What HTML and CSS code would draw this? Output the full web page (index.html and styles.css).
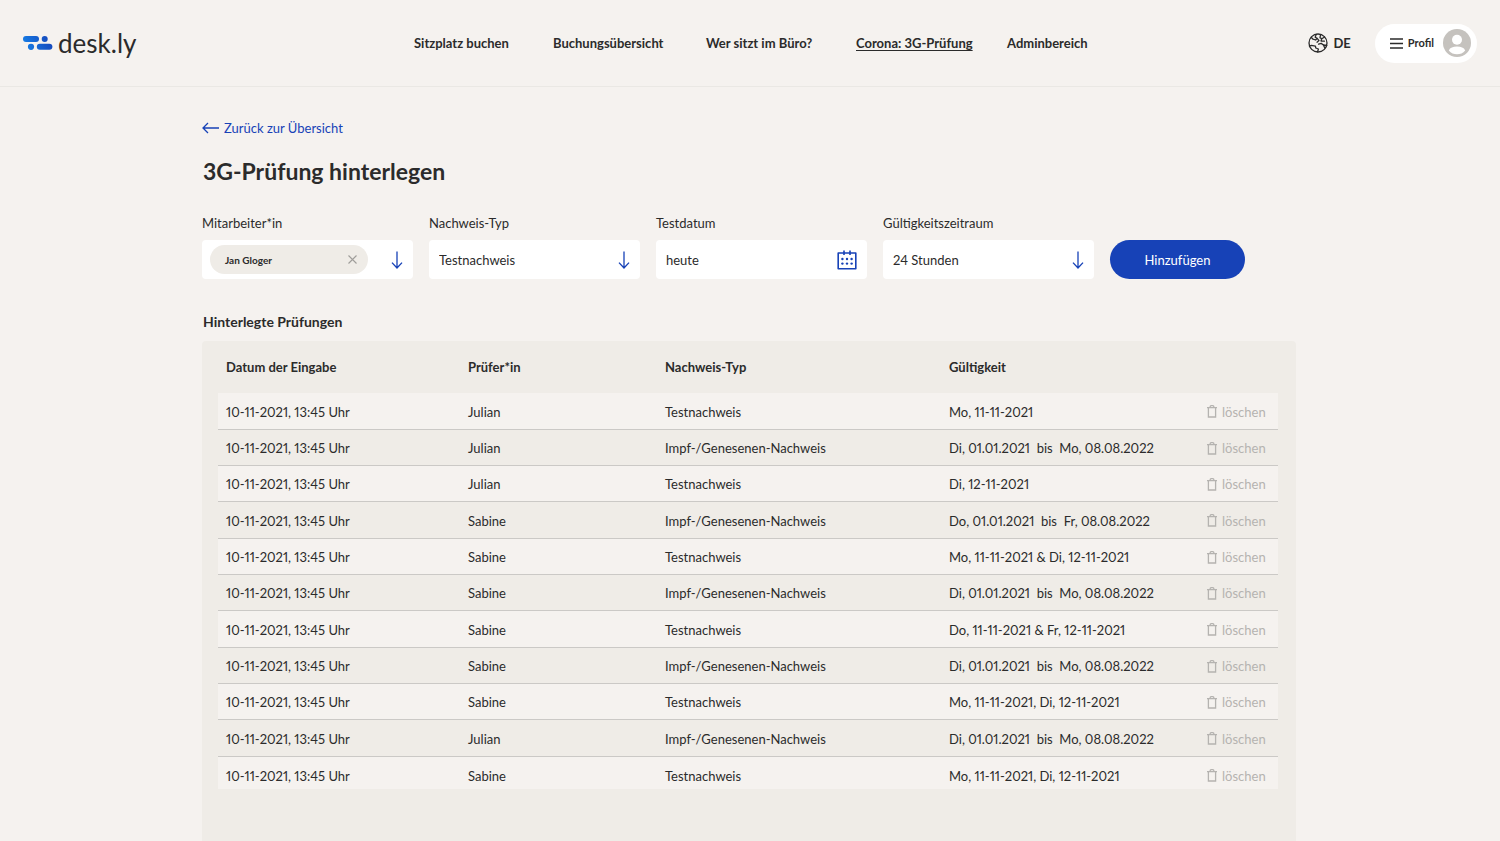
FILE: index.html
```html
<!DOCTYPE html>
<html lang="de">
<head>
<meta charset="utf-8">
<meta name="viewport" content="width=device-width, initial-scale=1">
<title>desk.ly – 3G-Prüfung hinterlegen</title>
<link rel="stylesheet" href="styles.css">
</head>
<body>
<svg class="sprite" aria-hidden="true">
  <symbol id="arrow-down" viewBox="0 0 12 18"><path d="M6 0.5V17M1 11.6L6 17L11 11.6" fill="none" stroke="currentColor" stroke-width="1.3"/></symbol>
  <symbol id="trash" viewBox="0 0 10 13"><path d="M0 2.6H10M1.4 2.6V12H8.6V2.6M3.2 2.6V1.6Q3.2 0.7 4.1 0.7H5.9Q6.8 0.7 6.8 1.6V2.6" fill="none" stroke="currentColor" stroke-width="1.3"/></symbol>
</svg>

<header class="topbar">
  <a class="logo" href="#">
    <svg class="logo-mark" viewBox="0 0 30 14" aria-hidden="true">
      <defs><linearGradient id="brand" gradientUnits="userSpaceOnUse" x1="0" y1="14" x2="30" y2="0"><stop offset="0" stop-color="#1683ea"/><stop offset="1" stop-color="#1541b6"/></linearGradient></defs>
      <g fill="url(#brand)"><rect x="0" y="0" width="16" height="6" rx="3"/><circle cx="21.7" cy="3" r="3"/><circle cx="8" cy="10.8" r="3.1"/><rect x="13.8" y="7.8" width="15.6" height="6" rx="3"/></g>
    </svg>
    <span>desk.ly</span>
  </a>
  <nav class="nav">
    <a href="#">Sitzplatz buchen</a>
    <a href="#">Buchungsübersicht</a>
    <a href="#">Wer sitzt im Büro?</a>
    <a class="active" href="#">Corona: 3G-Prüfung</a>
    <a href="#">Adminbereich</a>
  </nav>
  <div class="tools">
    <button class="lang" type="button">
      <svg width="20" height="20" viewBox="0 0 20 20" fill="none" stroke="currentColor" stroke-width="1.3" stroke-linejoin="round" stroke-linecap="round" aria-hidden="true"><circle cx="10" cy="10" r="9"/><path d="M3.2 4.2L5 6.2L7.6 7L9.2 5.4L7.2 4.2L8.2 1.4M9.2 5.4L11 7.6L9 9.2M12.6 1.6L12 4.6L13.8 5.8L13 8L16.4 8.2M13.8 5.8L16.6 4M18.8 12.4L15.4 12L13.2 10.4L10.6 11.2M15.4 12L16.8 15M1.4 13L3.4 12.4L7.4 13.2L7.8 15L10.4 16L9.6 18.8"/></svg>
      <span>DE</span>
    </button>
    <button class="profile" type="button">
      <svg width="13" height="11" viewBox="0 0 13 11" stroke="#2b2b2b" stroke-width="1.4" aria-hidden="true"><path d="M0 1H13M0 5.5H13M0 10H13"/></svg>
      <span>Profil</span>
      <svg class="avatar" width="28" height="28" viewBox="0 0 28 28" aria-hidden="true"><circle cx="14" cy="14" r="14" fill="#c5c2be"/><circle cx="14" cy="10.8" r="5" fill="#fff"/><path d="M5.8 21.4C7 18.8 10 17.6 14 17.6S21 18.8 22.2 21.4C20 24 17.2 25.2 14 25.2S8 24 5.8 21.4Z" fill="#fff"/></svg>
    </button>
  </div>
</header>

<main class="page">
  <a class="back" href="#">
    <svg width="17" height="12" viewBox="0 0 17 12" fill="none" stroke="currentColor" stroke-width="1.3" aria-hidden="true"><path d="M17 6H1M6 1L1 6L6 11"/></svg>
    <span>Zurück zur Übersicht</span>
  </a>
  <h1>3G-Prüfung hinterlegen</h1>

  <form class="entry">
    <div class="field">
      <label for="employee">Mitarbeiter*in</label>
      <div class="control tags">
        <span class="chip">Jan Gloger
          <button type="button" aria-label="Jan Gloger entfernen"><svg width="9" height="9" viewBox="0 0 9 9" stroke="#a09e9b" stroke-width="1.1" aria-hidden="true"><path d="M0.5 0.5L8.5 8.5M8.5 0.5L0.5 8.5"/></svg></button>
        </span>
        <button class="open" id="employee" type="button"><svg width="12" height="18" aria-hidden="true"><use href="#arrow-down"/></svg></button>
      </div>
    </div>
    <div class="field">
      <label for="proof">Nachweis-Typ</label>
      <div class="control">
        <select id="proof"><option>Testnachweis</option><option>Impf-/Genesenen-Nachweis</option></select>
        <svg class="hint" width="12" height="18" aria-hidden="true"><use href="#arrow-down"/></svg>
      </div>
    </div>
    <div class="field">
      <label for="date">Testdatum</label>
      <div class="control">
        <input id="date" type="text" value="heute">
        <svg class="hint" width="20" height="20" viewBox="0 0 20 20" aria-hidden="true"><path d="M1.2 3H18.8V18.8H1.2ZM7 0.5V5M13 0.5V5" fill="none" stroke="currentColor" stroke-width="1.6" stroke-linejoin="round"/><g fill="currentColor"><circle cx="5.4" cy="9" r="1.2"/><circle cx="10" cy="9" r="1.2"/><circle cx="14.6" cy="9" r="1.2"/><circle cx="5.4" cy="13.6" r="1.2"/><circle cx="10" cy="13.6" r="1.2"/><circle cx="14.6" cy="13.6" r="1.2"/></g></svg>
      </div>
    </div>
    <div class="field">
      <label for="period">Gültigkeitszeitraum</label>
      <div class="control">
        <select id="period"><option>24 Stunden</option><option>48 Stunden</option></select>
        <svg class="hint" width="12" height="18" aria-hidden="true"><use href="#arrow-down"/></svg>
      </div>
    </div>
    <button class="submit" type="button">Hinzufügen</button>
  </form>

  <h2>Hinterlegte Prüfungen</h2>
  <section class="card">
    <table>
      <colgroup><col class="c-date"><col class="c-by"><col class="c-type"><col class="c-valid"><col class="c-act"></colgroup>
      <thead><tr><th>Datum der Eingabe</th><th>Prüfer*in</th><th>Nachweis-Typ</th><th>Gültigkeit</th><td></td></tr></thead>
      <tbody>
        <tr><td>10-11-2021, 13:45 Uhr</td><td>Julian</td><td>Testnachweis</td><td>Mo, 11-11-2021</td><td><button class="del" type="button"><svg width="10" height="13" aria-hidden="true"><use href="#trash"/></svg>löschen</button></td></tr>
        <tr><td>10-11-2021, 13:45 Uhr</td><td>Julian</td><td>Impf-/Genesenen-Nachweis</td><td>Di, 01.01.2021&nbsp; bis&nbsp; Mo, 08.08.2022</td><td><button class="del" type="button"><svg width="10" height="13" aria-hidden="true"><use href="#trash"/></svg>löschen</button></td></tr>
        <tr><td>10-11-2021, 13:45 Uhr</td><td>Julian</td><td>Testnachweis</td><td>Di, 12-11-2021</td><td><button class="del" type="button"><svg width="10" height="13" aria-hidden="true"><use href="#trash"/></svg>löschen</button></td></tr>
        <tr><td>10-11-2021, 13:45 Uhr</td><td>Sabine</td><td>Impf-/Genesenen-Nachweis</td><td>Do, 01.01.2021&nbsp; bis&nbsp; Fr, 08.08.2022</td><td><button class="del" type="button"><svg width="10" height="13" aria-hidden="true"><use href="#trash"/></svg>löschen</button></td></tr>
        <tr><td>10-11-2021, 13:45 Uhr</td><td>Sabine</td><td>Testnachweis</td><td>Mo, 11-11-2021 &amp; Di, 12-11-2021</td><td><button class="del" type="button"><svg width="10" height="13" aria-hidden="true"><use href="#trash"/></svg>löschen</button></td></tr>
        <tr><td>10-11-2021, 13:45 Uhr</td><td>Sabine</td><td>Impf-/Genesenen-Nachweis</td><td>Di, 01.01.2021&nbsp; bis&nbsp; Mo, 08.08.2022</td><td><button class="del" type="button"><svg width="10" height="13" aria-hidden="true"><use href="#trash"/></svg>löschen</button></td></tr>
        <tr><td>10-11-2021, 13:45 Uhr</td><td>Sabine</td><td>Testnachweis</td><td>Do, 11-11-2021 &amp; Fr, 12-11-2021</td><td><button class="del" type="button"><svg width="10" height="13" aria-hidden="true"><use href="#trash"/></svg>löschen</button></td></tr>
        <tr><td>10-11-2021, 13:45 Uhr</td><td>Sabine</td><td>Impf-/Genesenen-Nachweis</td><td>Di, 01.01.2021&nbsp; bis&nbsp; Mo, 08.08.2022</td><td><button class="del" type="button"><svg width="10" height="13" aria-hidden="true"><use href="#trash"/></svg>löschen</button></td></tr>
        <tr><td>10-11-2021, 13:45 Uhr</td><td>Sabine</td><td>Testnachweis</td><td>Mo, 11-11-2021, Di, 12-11-2021</td><td><button class="del" type="button"><svg width="10" height="13" aria-hidden="true"><use href="#trash"/></svg>löschen</button></td></tr>
        <tr><td>10-11-2021, 13:45 Uhr</td><td>Julian</td><td>Impf-/Genesenen-Nachweis</td><td>Di, 01.01.2021&nbsp; bis&nbsp; Mo, 08.08.2022</td><td><button class="del" type="button"><svg width="10" height="13" aria-hidden="true"><use href="#trash"/></svg>löschen</button></td></tr>
        <tr><td>10-11-2021, 13:45 Uhr</td><td>Sabine</td><td>Testnachweis</td><td>Mo, 11-11-2021, Di, 12-11-2021</td><td><button class="del" type="button"><svg width="10" height="13" aria-hidden="true"><use href="#trash"/></svg>löschen</button></td></tr>
      </tbody>
    </table>
  </section>
</main>
</body>
</html>
```

FILE: styles.css
```css
:root {
  --bg: #f5f2ef;
  --panel: #efece7;
  --ink: #2b2b2b;
  --blue: #1742b7;
  --muted: #b5b3b0;
}
* { box-sizing: border-box; }
body {
  margin: 0;
  min-height: 100vh;
  display: flex;
  flex-direction: column;
  background: var(--bg);
  color: var(--ink);
  font-family: Lato, "Liberation Sans", sans-serif;
  font-size: 13px;
  line-height: 20px;
  font-variant-numeric: proportional-nums;
}
a { color: inherit; text-decoration: none; }
button, input, select { font: inherit; color: inherit; border: 0; background: none; padding: 0; margin: 0; }
button { cursor: pointer; }
svg { display: block; flex: none; }
.sprite { position: absolute; width: 0; height: 0; }

.topbar {
  display: grid;
  grid-template-columns: 1fr auto 1fr;
  align-items: center;
  min-height: 87px;
  padding: 0 23px;
  border-bottom: 1px solid #eae8e4;
}
.logo { display: flex; align-items: center; gap: 5px; font-size: 26px; line-height: 32px; }
.logo-mark { width: 30px; height: 14px; }
.nav { display: grid; grid-template-columns: 139px 153px 150px 151px 79px; font-weight: 700; white-space: nowrap; }
.nav .active { text-decoration: underline; text-underline-offset: 2px; }
.tools { display: flex; justify-content: flex-end; align-items: center; gap: 24px; font-weight: 700; }
.lang { display: flex; align-items: center; gap: 5px; }
.profile {
  display: flex;
  align-items: center;
  gap: 5px;
  height: 39px;
  padding: 0 6px 0 15px;
  border-radius: 20px;
  background: #fff;
  font-size: 11px;
}
.avatar { margin-left: 4px; }

.page { flex: 1; display: flex; flex-direction: column; padding: 31px 204px 0 202px; }
.back { display: flex; align-items: center; align-self: flex-start; gap: 5px; color: var(--blue); }
h1 { margin: 17px 0 0 1px; font-size: 23px; line-height: 32px; }
h2 { margin: 33px 0 9px 1px; font-size: 14px; line-height: 20px; }

.entry {
  display: grid;
  grid-template-columns: repeat(4, 1fr) 135px;
  column-gap: 16px;
  align-items: end;
  margin: 26px 51px 0 0;
}
.field { display: flex; flex-direction: column; gap: 7px; }
.control { position: relative; display: flex; height: 39px; background: #fff; border-radius: 4px; }
.control select, .control input { width: 100%; padding: 0 40px 0 10px; appearance: none; border-radius: 4px; }
.hint { position: absolute; right: 10px; top: 0; bottom: 0; margin: auto 0; color: var(--blue); pointer-events: none; }
.tags { align-items: center; gap: 23px; padding: 0 10px 0 8px; }
.chip {
  display: flex;
  flex: 1;
  align-items: center;
  justify-content: space-between;
  height: 29px;
  padding: 0 11px 0 15px;
  border-radius: 15px;
  background: var(--panel);
  font-size: 10px;
  font-weight: 700;
}
.open { color: var(--blue); }
.submit { height: 39px; border-radius: 20px; background: var(--blue); color: #fff; }

.card { flex: 1; padding: 0 18px 52px 16px; background: var(--panel); border-radius: 4px 4px 0 0; }
table { width: 100%; table-layout: fixed; border-collapse: separate; border-spacing: 0; }
.c-date { width: 242px; }
.c-by { width: 197px; }
.c-type { width: 284px; }
.c-act { width: 79px; }
th, td { padding: 0 0 0 8px; text-align: left; white-space: nowrap; }
thead th { height: 52px; }
tbody tr { height: 36px; }
tbody tr:nth-child(3n+1) { height: 37px; }
tbody tr:nth-child(odd) { background: var(--bg); }
tbody td { padding-top: 1px; border-bottom: 1px solid #cbc9c6; }
tbody tr:last-child { height: 32px; }
tbody tr:last-child td { padding-top: 5px; border-bottom: 0; }
.del { display: flex; align-items: center; gap: 5px; color: var(--muted); }
```
